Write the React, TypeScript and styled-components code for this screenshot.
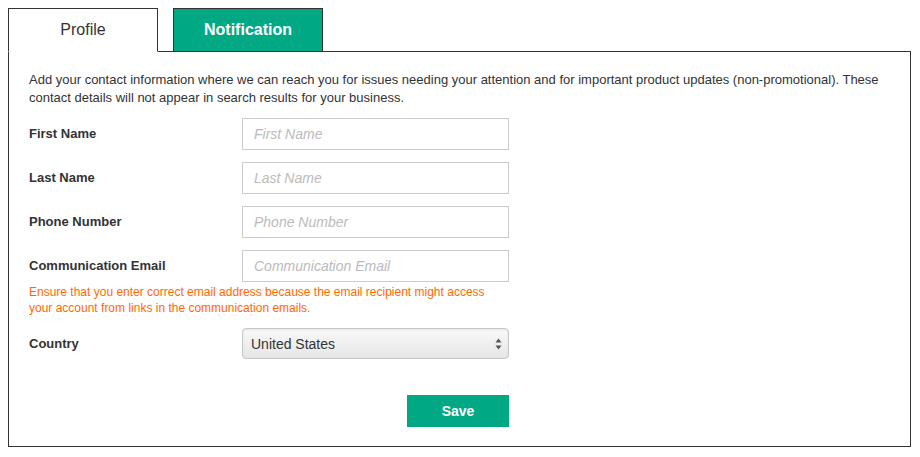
import React, { useState } from 'react';
import styled, { createGlobalStyle } from 'styled-components';

const GlobalStyle = createGlobalStyle`
  body {
    margin: 0;
    background: #fff;
    font-family: "Liberation Sans", Arial, sans-serif;
    color: #333;
  }
  #root {
    padding: 8px;
  }
`;

const fields = [
    { id: 'firstName', label: 'First Name' },
    { id: 'lastName', label: 'Last Name' },
    { id: 'phone', label: 'Phone Number' },
    { id: 'email', label: 'Communication Email' },
];

const App: React.FC = () => {
    const [tab, setTab] = useState<'profile' | 'notification'>('profile');
    const [country, setCountry] = useState('US');

    return (
        <>
            <GlobalStyle />
            <Tabs>
                <Tab $active={tab === 'profile'} onClick={() => setTab('profile')}>Profile</Tab>
                <Tab $active={tab === 'notification'} onClick={() => setTab('notification')}>Notification</Tab>
            </Tabs>
            <Panel>
                <Intro>
                    Add your contact information where we can reach you for issues needing your attention and for
                    important product updates (non-promotional). These contact details will not appear in search
                    results for your business.
                </Intro>
                {fields.map((f) => (
                    <React.Fragment key={f.id}>
                        <Row>
                            <Label htmlFor={f.id}>{f.label}</Label>
                            <Input id={f.id} placeholder={f.label} />
                        </Row>
                        {f.id === 'email' && (
                            <Hint>
                                Ensure that you enter correct email address because the email recipient might access
                                your account from links in the communication emails.
                            </Hint>
                        )}
                    </React.Fragment>
                ))}
                <Row $top={12}>
                    <Label htmlFor="country">Country</Label>
                    <SelectWrap>
                        <Select id="country" value={country} onChange={(e) => setCountry(e.target.value)}>
                            <option value="US">United States</option>
                            <option value="CA">Canada</option>
                            <option value="GB">United Kingdom</option>
                        </Select>
                        <Arrows width="7" height="12" viewBox="0 0 7 12">
                            <path d="M3.5 0.5 L6.5 4.5 L0.5 4.5 Z" fill="#555" />
                            <path d="M3.5 11.5 L6.5 7.5 L0.5 7.5 Z" fill="#555" />
                        </Arrows>
                    </SelectWrap>
                </Row>
                <Actions>
                    <SaveButton>Save</SaveButton>
                </Actions>
            </Panel>
        </>
    );
};

export default App;

// Стили
const Tabs = styled.div`
  display: flex;
  gap: 15px;
  margin-bottom: -1px;
  position: relative;
  z-index: 1;
`;

const Tab = styled.button<{ $active: boolean }>`
  width: 150px;
  height: 44px;
  box-sizing: border-box;
  border: 1px solid #333;
  border-bottom-color: ${(p) => (p.$active ? '#fff' : '#333')};
  background: ${(p) => (p.$active ? '#fff' : '#00a984')};
  color: ${(p) => (p.$active ? '#333' : '#fff')};
  font-family: "Liberation Sans", Arial, sans-serif;
  font-size: 16px;
  font-weight: ${(p) => (p.$active ? 'normal' : 'bold')};
  padding: 0 0 1px;
  cursor: pointer;
`;

const Panel = styled.div`
  width: 903px;
  box-sizing: border-box;
  border: 1px solid #333;
  padding: 19px 20px 19px;
`;

const Intro = styled.p`
  margin: 0 0 11px;
  font-size: 13px;
  line-height: 18px;
  color: #333;
`;

const Row = styled.div<{ $top?: number }>`
  display: flex;
  align-items: center;
  margin-top: ${(p) => p.$top ?? 0}px;
  margin-bottom: 12px;
`;

const Label = styled.label`
  width: 213px;
  margin-top: -1px;
  font-size: 13px;
  font-weight: bold;
  color: #333;
`;

const Input = styled.input`
  width: 267px;
  height: 32px;
  box-sizing: border-box;
  border: 1px solid #ccc;
  padding: 0 11px;
  font-family: "Liberation Sans", Arial, sans-serif;
  font-size: 14px;
  color: #333;
  outline: none;

  &::placeholder {
    color: #bbb;
    font-style: italic;
  }
`;

const Hint = styled.p`
  width: 470px;
  margin: -10px 0 0;
  font-size: 12px;
  line-height: 16px;
  color: #ff6a00;
`;

const SelectWrap = styled.div`
  position: relative;
  width: 267px;
  height: 31px;
`;

const Select = styled.select`
  appearance: none;
  width: 100%;
  height: 100%;
  box-sizing: border-box;
  border: 1px solid #c6c6c6;
  border-radius: 4px;
  padding: 0 24px 0 8px;
  background: linear-gradient(#f9f9f9, #e6e6e6);
  box-shadow: inset 0 1px 2px rgba(0, 0, 0, 0.08);
  font-family: "Liberation Sans", Arial, sans-serif;
  font-size: 14px;
  color: #333;
  outline: none;
`;

const Arrows = styled.svg`
  position: absolute;
  right: 7px;
  top: 10px;
  pointer-events: none;
`;

const Actions = styled.div`
  display: flex;
  justify-content: flex-end;
  width: 480px;
  margin-top: 36px;
`;

const SaveButton = styled.button`
  width: 102px;
  height: 32px;
  border: none;
  background: #00a984;
  color: #fff;
  font-family: "Liberation Sans", Arial, sans-serif;
  font-size: 14px;
  font-weight: bold;
  cursor: pointer;
`;
